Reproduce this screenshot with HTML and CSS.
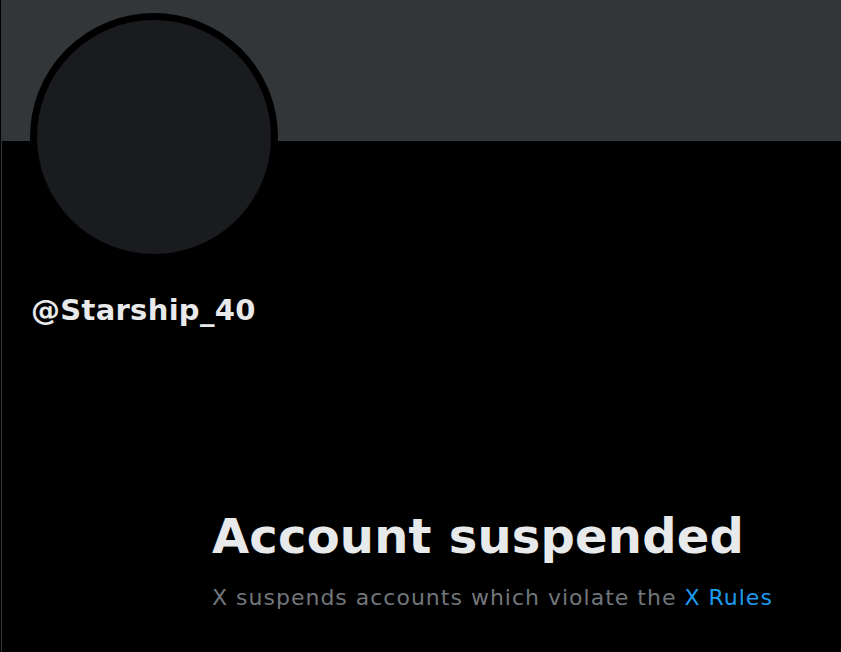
FILE: index.html
```html
<!DOCTYPE html>
<html lang="en">
<head>
<meta charset="utf-8">
<title>@Starship_40 / X</title>
<link rel="stylesheet" href="styles.css">
</head>
<body>
<main class="page">
  <div class="banner"></div>
  <div class="avatar"></div>
  <div class="handle">@Starship_40</div>
  <section class="message">
    <h1 class="title">Account suspended</h1>
    <p class="sub">X suspends accounts which violate the <a class="link" href="#">X Rules</a></p>
  </section>
</main>
</body>
</html>
```
FILE: styles.css
```css
html, body {
  margin: 0;
  padding: 0;
  background: #000;
  height: 100%;
}
body {
  padding-left: 1px;
  box-sizing: border-box;
  font-family: "DejaVu Sans", "Liberation Sans", sans-serif;
  color: #e7e9ea;
}
.page {
  border-left: 1px solid #2f3336;
  min-height: 100%;
  overflow: hidden;
}
.banner {
  height: 141px;
  background: #333639;
}
.avatar {
  width: 248px;
  height: 248px;
  box-sizing: border-box;
  border: 7px solid #000;
  border-radius: 50%;
  background: #1a1b1e;
  margin: -128px 0 0 28px;
}
.handle {
  margin: 31px 0 0 29px;
  font-size: 29px;
  font-weight: 700;
  line-height: 36px;
  letter-spacing: 0.3px;
}
.message {
  padding-left: 210px;
  margin-top: 180px;
}
.title {
  margin: 0;
  font-size: 48px;
  font-weight: 700;
  line-height: 56px;
  letter-spacing: 0.2px;
  color: #e7e9ea;
}
.sub {
  margin: 19px 0 0;
  font-size: 22px;
  line-height: 30px;
  letter-spacing: 1px;
  color: #71767b;
}
.link {
  color: #1d9bf0;
  text-decoration: none;
}
```
